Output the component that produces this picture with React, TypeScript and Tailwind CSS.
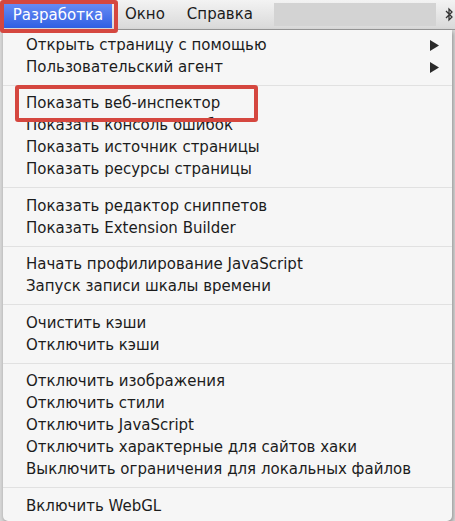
import React from "react";

type Item = { label: string; arrow?: boolean } | "sep";

const items: Item[] = [
  { label: "Открыть страницу с помощью", arrow: true },
  { label: "Пользовательский агент", arrow: true },
  "sep",
  { label: "Показать веб-инспектор" },
  { label: "Показать консоль ошибок" },
  { label: "Показать источник страницы" },
  { label: "Показать ресурсы страницы" },
  "sep",
  { label: "Показать редактор сниппетов" },
  { label: "Показать Extension Builder" },
  "sep",
  { label: "Начать профилирование JavaScript" },
  { label: "Запуск записи шкалы времени" },
  "sep",
  { label: "Очистить кэши" },
  { label: "Отключить кэши" },
  "sep",
  { label: "Отключить изображения" },
  { label: "Отключить стили" },
  { label: "Отключить JavaScript" },
  { label: "Отключить характерные для сайтов хаки" },
  { label: "Выключить ограничения для локальных файлов" },
  "sep",
  { label: "Включить WebGL" },
];

function Arrow() {
  return (
    <svg width="9" height="11" viewBox="0 0 9 11" className="mr-[13px]">
      <path d="M0 0 L9 5.5 L0 11 Z" fill="#2a2a2a" />
    </svg>
  );
}

function Bluetooth() {
  return (
    <svg width="8" height="16" viewBox="0 0 8 16" className="ml-[9px]">
      <path d="M1 4 L7 10 L4 13 L4 2 L7 5 L1 11" fill="none" stroke="#333" strokeWidth="1.3" />
    </svg>
  );
}

export default function App() {
  return (
    <div className="relative w-[455px] h-[521px] overflow-hidden bg-[#d8d8d8] font-['DejaVu_Sans',sans-serif] text-[#1c1c1c]">
      {/* menu bar */}
      <div className="h-[30px] flex items-center bg-gradient-to-b from-[#f3f3f3] to-[#d9d9d9] border-b border-[#9a9a9a] text-[15px]">
        <div className="ml-[4px] h-[26px] mt-[1px] w-[108px] flex items-center justify-center bg-gradient-to-b from-[#6b8ef5] to-[#2f5fe3] text-white">
          Разработка
        </div>
        <div className="ml-[13px]">Окно</div>
        <div className="ml-[22px]">Справка</div>
        <div className="ml-[21px] h-[23px] w-[162px] bg-[#d3d3d3]" />
        <Bluetooth />
      </div>

      {/* dropdown */}
      <div className="ml-[3px] w-[449px] h-[491px] bg-[#f6f6f6] rounded-b-[5px] shadow-[1px_2px_4px_rgba(0,0,0,0.35)] pt-[4px] text-[15px]">
        {items.map((it, i) =>
          it === "sep" ? (
            <div key={i} className="h-[14.5px] flex items-center">
              <div className="w-full h-px bg-[#e1e1e1]" />
            </div>
          ) : (
            <div key={i} className="h-[22px] flex items-center justify-between pl-[23px]">
              <span>{it.label}</span>
              {it.arrow && <Arrow />}
            </div>
          )
        )}
      </div>

      {/* red highlight boxes */}
      <div className="absolute left-0 top-0 w-[118px] h-[33px] border-[4px] border-[#d5473f] rounded-[3px]" />
      <div className="absolute left-[15px] top-[85px] w-[243px] h-[37px] border-[4px] border-[#d5473f] rounded-[3px]" />
    </div>
  );
}
